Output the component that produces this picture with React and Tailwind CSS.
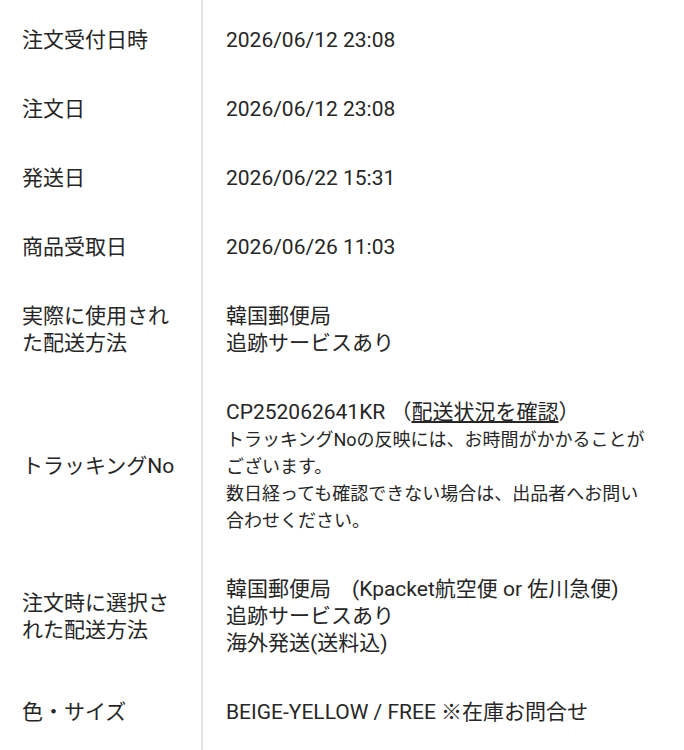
const rows = [
  { label: "注文受付日時", value: ["2026/06/12 23:08"] },
  { label: "注文日", value: ["2026/06/12 23:08"] },
  { label: "発送日", value: ["2026/06/22 15:31"] },
  { label: "商品受取日", value: ["2026/06/26 11:03"] },
  { label: "実際に使用された配送方法", value: ["韓国郵便局", "追跡サービスあり"] },
];

const Row = ({ label, children }) => (
  <div className="flex">
    <div className="w-[203px] shrink-0 border-r-2 border-[#e2e2e2] pl-[22px] pr-[20px] py-[21px] flex items-center">
      <p className="leading-[27px]">{label}</p>
    </div>
    <div className="flex-1 pl-[23px] pr-[31px] py-[21px] flex flex-col justify-center">
      {children}
    </div>
  </div>
);

// empty strip that only carries the column divider
const Spacer = ({ className }) => (
  <div className={className}>
    <div className="w-[203px] h-full border-r-2 border-[#e2e2e2]" />
  </div>
);

export default function App() {
  return (
    <div
      className="w-[684px] h-[750px] overflow-hidden bg-white flex flex-col text-[21px] text-[#262626]"
      style={{ fontFamily: "Roboto, 'Noto Sans CJK JP', sans-serif" }}
    >
      <Spacer className="h-[6px] shrink-0" />

      {rows.map((r) => (
        <Row key={r.label} label={r.label}>
          {r.value.map((v) => (
            <p key={v} className="leading-[27px]">{v}</p>
          ))}
        </Row>
      ))}

      <Row label="トラッキングNo">
        <p className="leading-[27px]">
          CP252062641KR （<span className="underline underline-offset-2">配送状況を確認</span>）
        </p>
        <p className="text-[18px] leading-[27px]">
          トラッキングNoの反映には、お時間がかかることがございます。
        </p>
        <p className="text-[18px] leading-[27px]">
          数日経っても確認できない場合は、出品者へお問い合わせください。
        </p>
      </Row>

      <Row label="注文時に選択された配送方法">
        <p className="leading-[27px]">韓国郵便局　(Kpacket航空便 or 佐川急便)</p>
        <p className="leading-[27px]">追跡サービスあり</p>
        <p className="leading-[27px]">海外発送(送料込)</p>
      </Row>

      <Row label="色・サイズ">
        <p className="leading-[27px]">BEIGE-YELLOW / FREE ※在庫お問合せ</p>
      </Row>

      <Spacer className="flex-1" />
    </div>
  );
}
